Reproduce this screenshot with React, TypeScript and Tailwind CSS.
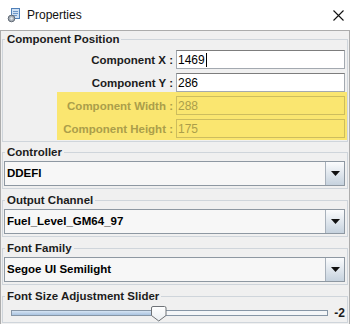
import React from "react";

function Legend({ children }: { children: React.ReactNode }) {
  return (
    <legend className="ml-[1px] px-[2px] text-[11.5px] leading-[14px] font-bold text-[#1c1c1c]">
      {children}
    </legend>
  );
}

function Field({ label, value, disabled, caret }: { label: string; value: string; disabled?: boolean; caret?: boolean }) {
  return (
    <div className="flex justify-end items-center h-[19px]">
      <span
        className={`mr-[3px] text-[11.5px] font-bold leading-[14px] ${disabled ? "text-[#ab9e4a]" : "text-[#1c1c1c]"}`}
      >
        {label}
      </span>
      <div
        className={`w-[169px] h-[19px] flex items-center pl-[1px] text-[12px] leading-[14px] border ${
          disabled
            ? "border-[#cdbd5e] text-[#ab9e4a] bg-transparent"
            : "border-[#a3a9b0] border-t-[#7d7d7d] bg-white text-black"
        }`}
      >
        <span>{value}</span>
        {caret && <span className="ml-[1px] w-px h-[14px] bg-black" />}
      </div>
    </div>
  );
}

function Combo({ value }: { value: string }) {
  return (
    <div className="mt-[2px] h-[25px] flex border border-[#8e98a2] bg-[#f7f7f7]">
      <div className="flex-1 flex items-center pl-[2px] text-[11.5px] font-bold text-black">{value}</div>
      <div className="w-[19px] border-l border-[#a8b1bb] bg-gradient-to-b from-[#fbfcfd] to-[#c6d2de] flex items-center justify-center">
        <svg width="9" height="5" viewBox="0 0 9 5">
          <path d="M0 0 H9 L4.5 5 Z" fill="#111" />
        </svg>
      </div>
    </div>
  );
}

export default function App() {
  return (
    <div className="w-[351px] h-[324px] overflow-hidden bg-white font-['Liberation_Sans',Arial,sans-serif] text-black">
      <div className="h-[30px] flex items-center bg-white">
        <svg className="ml-[6px]" width="16" height="16" viewBox="0 0 16 16">
          <rect x="5.5" y="1.5" width="8" height="10" fill="#cfe0f3" stroke="#4f80b8" />
          <path d="M7 4.5 H12 M7 6.5 H12 M7 8.5 H11" stroke="#6d97c8" strokeWidth="1" />
          <circle cx="5.5" cy="11.5" r="3.3" fill="#a7afb8" stroke="#5f6873" />
          <circle cx="5.5" cy="11.5" r="1.2" fill="#e6e9ec" />
        </svg>
        <span className="ml-[5px] text-[12px] leading-none text-[#111]">Properties</span>
        <svg className="ml-auto mr-[7px]" width="11" height="11" viewBox="0 0 11 11">
          <path d="M0.5 0.5 L10.5 10.5 M10.5 0.5 L0.5 10.5" stroke="#111" strokeWidth="1.1" />
        </svg>
      </div>
      <div className="h-[294px] w-[350px] border-t border-l border-r border-[#acacac] bg-[#f0f0f0] px-[1px] pt-[1px]">
        <fieldset className="border border-[#cfd5db] pl-[1px] pr-[2px] pb-[1px]">
          <Legend>Component Position</Legend>
          <div className="mt-[4px] flex flex-col gap-[4px]">
            <Field label="Component X :" value="1469" caret />
            <Field label="Component Y :" value="286" />
          </div>
          <div className="ml-[53px] -mr-[2px] pr-[2px] pt-[4px] pb-[2px] bg-[#fae670] flex flex-col gap-[4px]">
            <Field label="Component Width :" value="288" disabled />
            <Field label="Component Height :" value="175" disabled />
          </div>
        </fieldset>
        <fieldset className="mt-[3px] border border-[#cfd5db] pl-[1px] pr-[2px] pb-[2px]">
          <Legend>Controller</Legend>
          <Combo value="DDEFI" />
        </fieldset>
        <fieldset className="mt-[4px] border border-[#cfd5db] pl-[1px] pr-[2px] pb-[2px]">
          <Legend>Output Channel</Legend>
          <Combo value="Fuel_Level_GM64_97" />
        </fieldset>
        <fieldset className="mt-[4px] border border-[#cfd5db] pl-[1px] pr-[2px] pb-[2px]">
          <Legend>Font Family</Legend>
          <Combo value="Segoe UI Semilight" />
        </fieldset>
        <fieldset className="mt-[4px] border border-[#cfd5db] pl-[1px] pr-[2px] pb-[1px]">
          <Legend>Font Size Adjustment Slider</Legend>
          <div className="mt-[2px] h-[16px] flex items-center">
            <div className="relative ml-[7px] flex-1 h-[6px] border border-[#8796a6] bg-[#f4f6f8] flex">
              <div className="w-[141px] h-full bg-gradient-to-b from-[#d6e4f3] to-[#a9c3e0]" />
              <svg className="absolute left-[139px] top-[-5px]" width="16" height="16" viewBox="0 0 16 16">
                <defs>
                  <linearGradient id="tg" x1="0" y1="0" x2="0" y2="1">
                    <stop offset="0" stopColor="#ffffff" />
                    <stop offset="1" stopColor="#e9edf1" />
                  </linearGradient>
                </defs>
                <path d="M0.5 2 Q0.5 0.5 2 0.5 H13.5 Q15 0.5 15 2 V9.5 L7.75 15 L0.5 9.5 Z" fill="url(#tg)" stroke="#6e7277" />
              </svg>
            </div>
            <span className="ml-[6px] text-[12px] font-bold leading-none text-[#1c1c1c]">-2</span>
          </div>
        </fieldset>
      </div>
    </div>
  );
}
